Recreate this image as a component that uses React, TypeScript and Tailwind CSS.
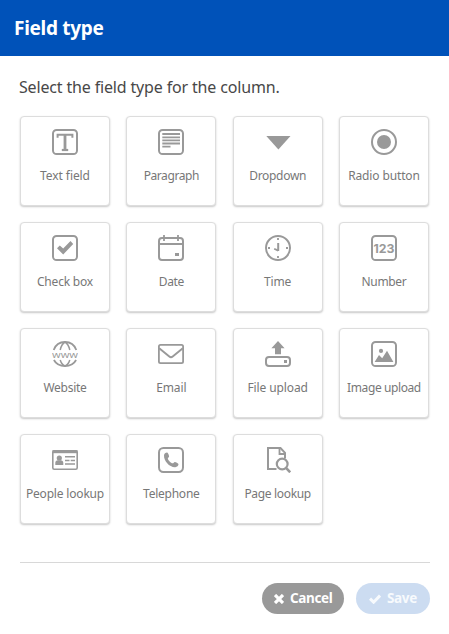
import type { ReactNode } from "react";

const G = "#999999";

function Icon({ children }: { children: ReactNode }) {
  return (
    <svg className="block h-[26px] w-[26px]" viewBox="0 0 26 26" fill="none" stroke={G} strokeWidth={2}>
      {children}
    </svg>
  );
}

const frame = <rect x="1" y="1" width="24" height="24" rx="3.6" />;

type Field = { label: string; tracking: string; icon: ReactNode };

const fields: Field[] = [
  {
    label: "Text field",
    tracking: "tracking-[-0.08px]",
    icon: (
      <>
        {frame}
        <path d="M5.6 8.8V5.8H20.4V8.8" strokeWidth="2" />
        <path d="M13 6V21" strokeWidth="2.8" />
        <path d="M9.8 21H16.2" strokeWidth="2.2" />
      </>
    ),
  },
  {
    label: "Paragraph",
    tracking: "tracking-[-0.42px]",
    icon: (
      <>
        {frame}
        <path d="M4.3 5H22M4.3 8.3H22M4.3 11.4H22M4.3 14.5H22M4.3 17.6H12.5" strokeWidth="1.8" />
      </>
    ),
  },
  {
    label: "Dropdown",
    tracking: "tracking-[-0.3px]",
    icon: <path d="M1.3 7H25.5L13.4 20.6Z" fill={G} stroke="none" />,
  },
  {
    label: "Radio button",
    tracking: "tracking-[-0.13px]",
    icon: (
      <>
        <circle cx="13" cy="13" r="12" />
        <circle cx="13" cy="13" r="7" fill={G} stroke="none" />
      </>
    ),
  },
  {
    label: "Check box",
    tracking: "tracking-[-0.2px]",
    icon: (
      <>
        {frame}
        <path d="M5 13.3L7.8 10.4L11.2 13.6L18.5 6L21.2 9L11.2 19.4Z" fill={G} stroke="none" />
      </>
    ),
  },
  {
    label: "Date",
    tracking: "tracking-[-0.35px]",
    icon: (
      <>
        <rect x="1" y="3" width="24" height="22" rx="3" />
        <path d="M1 9H25" />
        <path d="M6 0V6M20 0V6" strokeWidth="1.8" />
        <rect x="17" y="18" width="4" height="3" fill={G} stroke="none" />
      </>
    ),
  },
  {
    label: "Time",
    tracking: "tracking-[-0.15px]",
    icon: (
      <>
        <circle cx="13" cy="13" r="12" />
        <path d="M13 3V5M13 21V23M3 13H5M21 13H23" strokeWidth="1.8" />
        <path d="M13.2 8V16" />
        <path d="M13.2 15.6L9.2 13.8" strokeWidth="1.8" />
      </>
    ),
  },
  {
    label: "Number",
    tracking: "tracking-[-0.35px]",
    icon: (
      <>
        {frame}
        <text x="2.5" y="18.1" fontSize="12" fontWeight="700" fontFamily="Inter, sans-serif" fill={G} stroke="none" textLength="21" lengthAdjust="spacingAndGlyphs">123</text>
      </>
    ),
  },
  {
    label: "Website",
    tracking: "tracking-[-0.28px]",
    icon: (
      <>
        <path d="M1.7 9C3.5 4 7.8 1 13 1C18.2 1 22.5 4 24.3 9M1.9 19C4 22.8 8 25 13 25C18 25 22 22.8 24.1 19" strokeWidth="1.8" />
        <path d="M8.2 9C9 5.5 10.5 2.5 13 1C15.5 2.5 17 5.5 17.8 9M8.2 19C9 21.5 10.5 24 13 25C15.5 24 17 21.5 17.8 19" strokeWidth="1.5" />
        <text x="0" y="16.6" fontSize="9" fontWeight="400" fontFamily="'Open Sans', sans-serif" fill={G} stroke="none" textLength="26" lengthAdjust="spacingAndGlyphs">www</text>
      </>
    ),
  },
  {
    label: "Email",
    tracking: "tracking-[-0.1px]",
    icon: (
      <>
        <rect x="0.9" y="3.9" width="24.2" height="18.2" rx="1.6" strokeWidth="1.8" />
        <path d="M1.2 7.2L11.3 15.6C12.4 16.5 13.6 16.5 14.7 15.6L24.8 7.2" strokeWidth="1.9" />
      </>
    ),
  },
  {
    label: "File upload",
    tracking: "tracking-[-0.12px]",
    icon: (
      <>
        <path d="M13 0L19.6 7.2H16V13.2H10V7.2H6.4Z" fill={G} stroke="none" />
        <rect x="1" y="16" width="24" height="9" rx="3" />
        <rect x="19" y="19" width="3" height="3" fill={G} stroke="none" />
      </>
    ),
  },
  {
    label: "Image upload",
    tracking: "tracking-[-0.4px]",
    icon: (
      <>
        {frame}
        <circle cx="10" cy="9.9" r="2.1" fill={G} stroke="none" />
        <path d="M3.6 21L8 14L11.2 17.2L16 9.7L22.4 21Z" fill={G} stroke="none" />
      </>
    ),
  },
  {
    label: "People lookup",
    tracking: "tracking-[-0.18px]",
    icon: (
      <>
        <rect x="0.8" y="3.8" width="24.4" height="18.4" rx="1.4" strokeWidth="1.6" />
        <rect x="0.5" y="3.2" width="25" height="3" fill={G} stroke="none" />
        <circle cx="7.3" cy="11" r="2.6" fill={G} stroke="none" />
        <path d="M3.3 18V15.8C3.3 14.2 4.4 13.2 5.8 13.2H8.8C10.2 13.2 11.3 14.2 11.3 15.8V18Z" fill={G} stroke="none" />
        <path d="M13 9.7H23M13 13.4H17.5M18.7 13.4H23M13 17H23" strokeWidth="1.5" />
      </>
    ),
  },
  {
    label: "Telephone",
    tracking: "tracking-[-0.24px]",
    icon: (
      <>
        <rect x="1" y="1" width="24" height="24" rx="4.4" />
        <path d="M6 8.3C6.3 6.6 7.7 5.5 9.2 5.6C9.9 6 11 8.2 11.1 9.2C11.1 10.2 9.9 10.6 9.8 11.4C10.1 13.2 12.9 15.9 14.7 16.3C15.5 16.2 15.9 15 16.9 14.9C17.9 15 20.1 16.3 20.5 17C20.5 18.8 19 19.9 17.3 20.2C11.6 20.5 5.7 14.2 6 8.3Z" fill={G} stroke="none" />
      </>
    ),
  },
  {
    label: "Page lookup",
    tracking: "tracking-[-0.33px]",
    icon: (
      <>
        <path d="M11.5 22H3V1H15.5L20 5.8V11.5" />
        <path d="M14.5 1V7H20.5" strokeWidth="1.8" />
        <circle cx="17.2" cy="17" r="5.4" strokeWidth="2.2" />
        <path d="M21 20.8L25.2 25.3" strokeWidth="2.6" />
      </>
    ),
  },
];

function FieldCard({ label, tracking, icon }: Field) {
  return (
    <button className="flex h-[90px] w-[90px] flex-col items-center rounded-[4px] border border-[#dddddd] bg-white pt-3 shadow-[0_1px_2px_rgba(0,0,0,0.22)]">
      <Icon>{icon}</Icon>
      <span className={`mt-3 text-[12px] leading-[18px] whitespace-nowrap text-[#777777] ${tracking}`}>{label}</span>
    </button>
  );
}

export default function App() {
  return (
    <div className="h-[634px] w-[449px] bg-white font-['Noto_Sans',sans-serif]">
      <header className="flex h-14 items-center bg-[#0052b9] pl-[14px]">
        <h1 className="text-[19px] leading-6 font-bold tracking-[-0.3px] text-white">Field type</h1>
      </header>
      <main className="pr-[19px] pl-5">
        <p className="-ml-px pt-[19px] pb-[17px] text-[16px] leading-6 tracking-[-0.16px] text-[#484848]">Select the field type for the column.</p>
        <div className="grid w-[409px] grid-cols-[repeat(4,90px)] justify-between gap-y-4">
          {fields.map((f) => (
            <FieldCard key={f.label} {...f} />
          ))}
        </div>
        <footer className="mt-[38px] flex justify-end gap-3 border-t border-[#d8d8d8] pt-5">
          <button className="flex h-[31px] w-[82px] items-center rounded-full bg-[#999999] pl-3 text-[13.5px] font-bold tracking-[-0.35px] text-white">
            <svg className="mr-[6px] h-[10px] w-[10px]" viewBox="0 0 10 10" fill="none" stroke="white" strokeWidth="3.2">
              <path d="M1 1L9 9M9 1L1 9" />
            </svg>
            Cancel
          </button>
          <button className="flex h-[31px] w-[74px] items-center rounded-full bg-[#ccdcf1] pl-[13px] text-[13.5px] font-bold tracking-[-0.35px] text-[#f7fafd]">
            <svg className="mr-[6px] h-[10px] w-3" viewBox="0 0 12 10" fill="none" stroke="#f7fafd" strokeWidth="3">
              <path d="M1 4.7L4.6 8.2L11 1.6" />
            </svg>
            Save
          </button>
        </footer>
      </main>
    </div>
  );
}
